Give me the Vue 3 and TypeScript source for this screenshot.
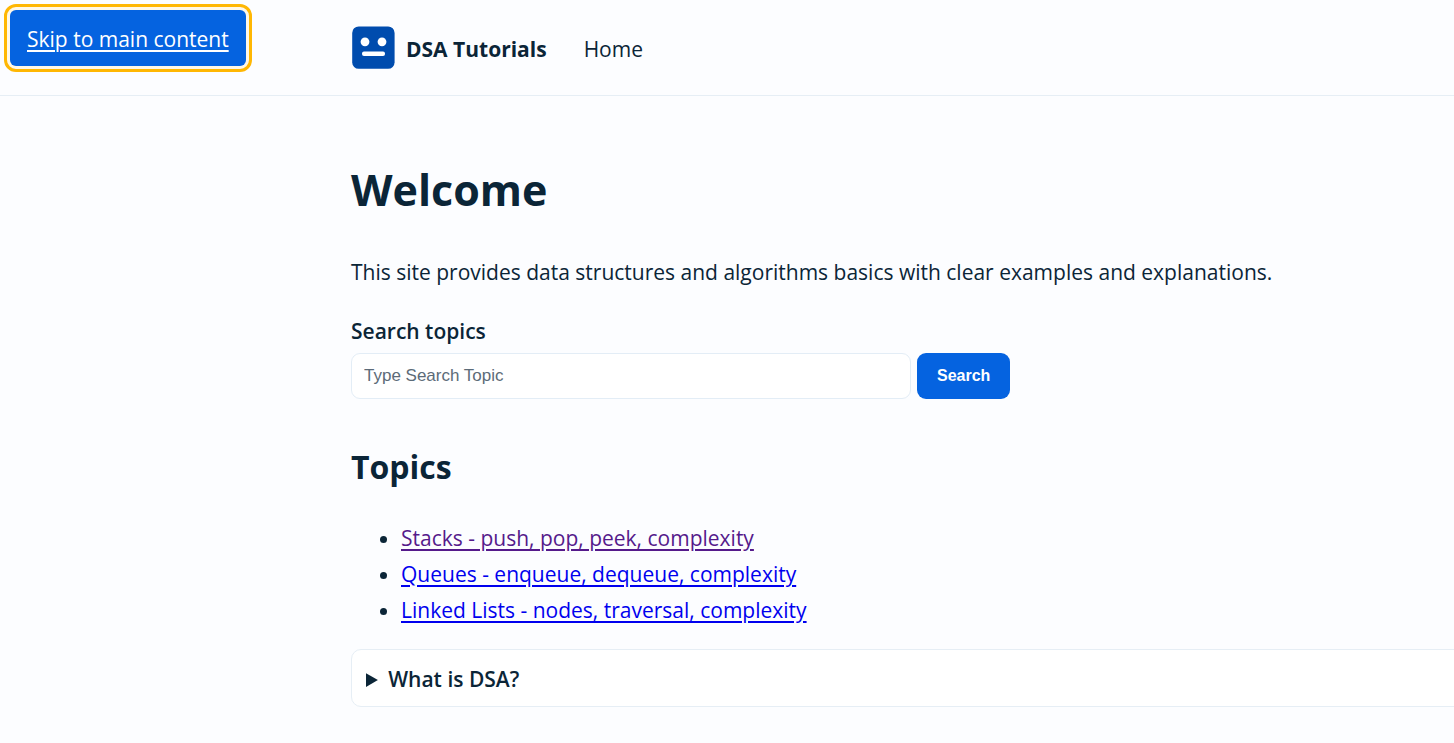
<script setup lang="ts">
import { ref } from 'vue'

interface Topic {
  id: string
  label: string
  visited: boolean
}

const query = ref<string>('')

const topics: Topic[] = [
  { id: 'stacks', label: 'Stacks - push, pop, peek, complexity', visited: true },
  { id: 'queues', label: 'Queues - enqueue, dequeue, complexity', visited: false },
  { id: 'linked-lists', label: 'Linked Lists - nodes, traversal, complexity', visited: false },
]
</script>

<template>
  <div class="page">
    <a class="skip-link" href="#main">Skip to main content</a>

    <header class="site-header">
      <nav class="nav" aria-label="Primary">
        <a class="brand" href="#home">
          <svg class="logo" viewBox="0 0 44 44" aria-hidden="true">
            <rect x="1.2" y="0.4" width="42.4" height="42.4" rx="6.5" fill="#004cae" />
            <circle cx="14" cy="15.8" r="4.4" fill="#fff" />
            <circle cx="31" cy="15.8" r="4.4" fill="#fff" />
            <rect x="11" y="25.6" width="23" height="4.4" rx="2" fill="#fff" />
          </svg>
          <span>DSA Tutorials</span>
        </a>
        <a class="nav-link" href="#home">Home</a>
      </nav>
    </header>

    <main id="main" class="content">
      <h1>Welcome</h1>
      <p class="intro">
        This site provides data structures and algorithms basics with clear examples and explanations.
      </p>

      <form class="search" role="search" @submit.prevent>
        <label for="topic-search">Search topics</label>
        <div class="search-row">
          <input id="topic-search" v-model="query" type="search" placeholder="Type Search Topic" />
          <button type="submit">Search</button>
        </div>
      </form>

      <h2>Topics</h2>
      <ul class="topics">
        <li v-for="topic in topics" :key="topic.id">
          <a :href="`#${topic.id}`" :class="{ visited: topic.visited }">{{ topic.label }}</a>
        </li>
      </ul>

      <details class="faq">
        <summary>What is DSA?</summary>
      </details>
    </main>
  </div>
</template>

<style>
body {
  background: #fcfdff;
}
</style>

<style scoped>
.page {
  position: relative;
  overflow: hidden;
  color: #0b2537;
  font-family: "Segoe UI", "Open Sans", "Noto Sans", sans-serif;
  font-size: 21px;
  line-height: 36px;
}

.skip-link {
  position: absolute;
  top: 10px;
  left: 10px;
  padding: 11px 17px 9px;
  border-radius: 6px;
  background: #0563e0;
  box-shadow: 0 0 0 3px #fff8e8;
  color: #fff;
  outline: 3px solid #ffb703;
  outline-offset: 3px;
  text-underline-offset: 3px;
}

.site-header {
  padding: 24px 0 21px 351px;
  border-bottom: 1px solid #e6eef5;
}

.nav {
  display: flex;
  align-items: center;
  gap: 37px;
  height: 50px;
}

.brand {
  display: flex;
  align-items: center;
  gap: 11px;
  color: inherit;
  font-weight: 700;
  text-decoration: none;
}

.logo {
  width: 44px;
  height: 44px;
  margin-bottom: 2px;
}

.nav-link {
  color: inherit;
  text-decoration: none;
}

.content {
  margin-right: -24px;
  padding: 64px 0 36px 351px;
}

h1,
h2,
p {
  margin: 0;
}

h1 {
  font-size: 43px;
  line-height: 60px;
}

.intro {
  margin-top: 34px;
}

.search {
  margin-top: 23px;
}

.search label {
  display: block;
  font-weight: 600;
}

.search-row {
  display: flex;
  gap: 6px;
  margin-top: 4px;
}

.search-row input,
.search-row button {
  box-sizing: border-box;
  height: 46px;
  border-radius: 9px;
  font-family: Arial, "Liberation Sans", sans-serif;
  font-size: 16px;
}

.search-row input {
  width: 560px;
  padding: 0 12px;
  border: 1px solid #e3edf6;
  background: #fff;
  color: inherit;
  font-size: 17px;
  appearance: none;
}

.search-row input::placeholder {
  color: #5c6b78;
}

.search-row button {
  padding: 0 20px;
  border: 0;
  background: #0563e0;
  color: #fff;
  font-weight: 700;
}

h2 {
  margin-top: 43px;
  font-size: 32px;
  line-height: 50px;
}

.topics {
  margin: 28px 0 0;
  padding-left: 50px;
}

.topics a {
  color: #0000ee;
  text-underline-offset: 3px;
}

.topics a.visited {
  color: #551a8b;
}

.faq {
  margin-top: 21px;
  padding: 11px 14px 9px;
  border: 1px solid #e6eef5;
  border-radius: 10px;
  background: #fff;
}

.faq summary {
  font-weight: 600;
}
</style>
